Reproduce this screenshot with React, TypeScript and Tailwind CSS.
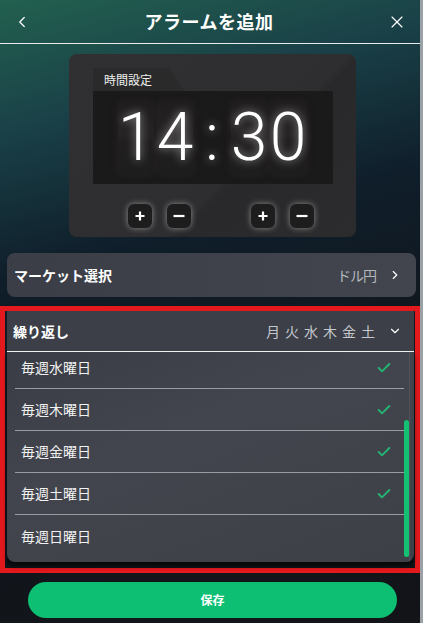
import { Check, ChevronDown, ChevronLeft, ChevronRight, X } from 'lucide-react';

const repeatDays = [
  { label: '毎週水曜日', on: true },
  { label: '毎週木曜日', on: true },
  { label: '毎週金曜日', on: true },
  { label: '毎週土曜日', on: true },
  { label: '毎週日曜日', on: false },
];

const clockChars = ['1', '4', ':', '3', '0'];

function StepButton({ sign }: { sign: '+' | '-' }) {
  return (
    <button className="flex h-[24px] w-[24px] items-center justify-center rounded-[6px] bg-[#1d1d1e] shadow-[0_0_6px_rgba(255,255,255,0.45)]">
      {sign === '+' ? (
        <svg width="12" height="12" viewBox="0 0 12 12">
          <path d="M6 1.5v9M1.5 6h9" stroke="white" strokeWidth="2.2" />
        </svg>
      ) : (
        <svg width="14" height="12" viewBox="0 0 14 12">
          <path d="M1.5 6h11" stroke="white" strokeWidth="2.2" />
        </svg>
      )}
    </button>
  );
}

export default function App() {
  return (
    <div className="flex h-[623px] w-[423px] bg-[#9aa2a8] font-['Noto_Sans_CJK_JP','Noto_Sans',sans-serif]">
      <div className="flex h-full w-[420px] flex-col bg-[linear-gradient(165deg,#22604f_0%,#1a4148_18%,#0f1e2a_38%,#11161d_60%,#121418_100%)]">
        {/* header */}
        <div className="flex h-[43px] items-center justify-between px-[13px]">
          <ChevronLeft size={18} strokeWidth={1.6} className="text-white" />
          <h1 className="text-[18px] font-bold tracking-[0.5px] text-white">アラームを追加</h1>
          <X size={20} strokeWidth={1.4} className="text-white" />
        </div>
        <div className="h-px bg-[#e8ecec]" />

        {/* time setting */}
        <div className="ml-[69px] mt-[10px] flex h-[183px] w-[287px] flex-col rounded-[8px] bg-[linear-gradient(135deg,#303032_0%,#2e2e30_60%,#29292b_62%,#2c2c2e_100%)] pl-[24px] pt-[14px]">
          <div className="flex h-[23px] w-[91px] items-center bg-[#2a2a2b] pl-[11px] [clip-path:polygon(0_0,84%_0,100%_100%,0_100%)]">
            <span className="text-[12px] text-[#f0f0f0]">時間設定</span>
          </div>
          <div className="flex h-[93px] w-[240px] items-center justify-center gap-[3px] bg-[#1b1a1b] pr-[2px]">
            {clockChars.map((c, i) => (
              <span
                key={i}
                className={
                  c === ':'
                    ? "flex h-[72px] w-[32px] items-center justify-center font-['Roboto'] text-[66px] font-light leading-none text-white [text-shadow:0_0_10px_rgba(255,255,255,0.55)]"
                    : "flex h-[72px] w-[36px] items-center justify-center rounded-[4px] bg-[linear-gradient(180deg,#1f1d1e_0%,#272425_45%,#211f20_55%,#1e1d1e_100%)] shadow-[0_0_6px_rgba(40,36,38,0.9)] font-['Roboto'] text-[66px] font-light leading-none text-white [text-shadow:0_0_10px_rgba(255,255,255,0.55)]"
                }
              >
                {c}
              </span>
            ))}
          </div>
          <div className="ml-[35px] mt-[20px] flex gap-[15px]">
            <StepButton sign="+" />
            <StepButton sign="-" />
            <div className="w-[30px]" />
            <StepButton sign="+" />
            <StepButton sign="-" />
          </div>
        </div>

        {/* market */}
        <div className="ml-[7px] mt-[16px] flex h-[44px] w-[409px] items-center justify-between rounded-[8px] bg-[linear-gradient(90deg,#3b3e46,#42454d)] pl-[7px] pr-[14px]">
          <span className="text-[14px] font-bold text-white">マーケット選択</span>
          <div className="flex items-center gap-[12px] text-[#b4b7bc]">
            <span className="text-[14px] tracking-[-1px]">ドル円</span>
            <ChevronRight size={14} strokeWidth={2} className="text-white" />
          </div>
        </div>

        {/* repeat */}
        <div className="mt-[9px] h-[267px] w-[420px] border-[5px] border-[#e4191d] pl-[2px] pr-[1px]">
          <div className="flex h-full flex-col bg-[#101318]">
            <div className="flex h-[40px] items-center justify-between bg-[#3c3f47] pl-[6px] pr-[12px]">
              <span className="text-[14px] font-bold text-white">繰り返し</span>
              <div className="flex items-center gap-[8px]">
                <span className="text-[14px] tracking-[5px] text-[#c4c7cc]">月火水木金土</span>
                <ChevronDown size={14} strokeWidth={2} className="text-white" />
              </div>
            </div>
            <div className="h-px bg-[#f2f2f2]" />
            <div className="flex h-[210px] overflow-hidden rounded-b-[8px] bg-[linear-gradient(160deg,#3a3d45_0%,#43454e_40%,#3e4047_100%)] pl-[8px] shadow-[0_4px_4px_rgba(0,0,0,0.6)]">
              <div className="-mt-[5px] flex w-[389px] flex-col">
                {repeatDays.map((d, i) => (
                  <div
                    key={d.label}
                    className={
                      i < repeatDays.length - 1
                        ? 'flex h-[42px] shrink-0 items-center justify-between border-b border-[#9a9ca1] pl-[6px] pr-[12px]'
                        : 'flex h-[42px] shrink-0 items-center justify-between pl-[6px] pr-[12px]'
                    }
                  >
                    <span className="text-[14px] text-[#f2f2f2]">{d.label}</span>
                    {d.on && <Check size={16} strokeWidth={2.8} className="text-[#23b574]" />}
                  </div>
                ))}
              </div>
              <div className="flex w-[6px] flex-col justify-end border-r border-[#50535b] pb-[5px]">
                <div className="h-[137px] w-[5px] rounded-full bg-[#14c172]" />
              </div>
            </div>
          </div>
        </div>

        {/* save */}
        <button className="ml-[28px] mt-[9px] flex h-[36px] w-[369px] items-center justify-center rounded-full bg-[#0dbf72]">
          <span className="text-[12px] font-bold text-white">保存</span>
        </button>
      </div>
    </div>
  );
}
